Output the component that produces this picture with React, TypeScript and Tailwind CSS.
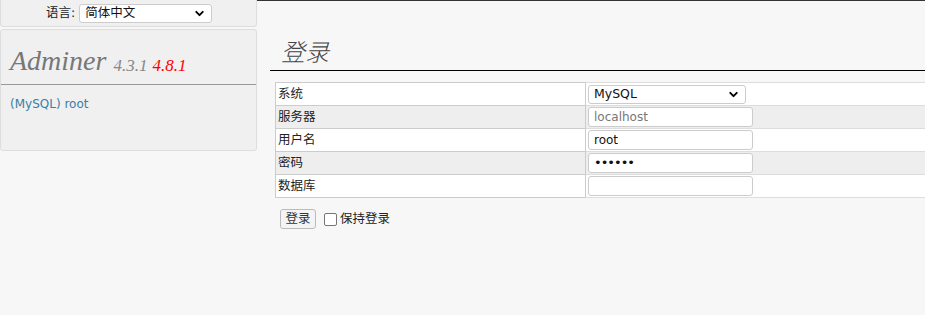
import { ChevronDown } from 'lucide-react'

const SANS = 'font-["DejaVu_Sans","Noto_Sans_CJK_SC",sans-serif]'

const ROWS = [
  { label: '系统', kind: 'select', value: 'MySQL' },
  { label: '服务器', kind: 'input', value: 'localhost', muted: true },
  { label: '用户名', kind: 'input', value: 'root' },
  { label: '密码', kind: 'input', value: '••••••' },
  { label: '数据库', kind: 'input', value: '' },
]

function FakeSelect({ value, width }: { value: string; width: string }) {
  return (
    <div className={`${width} h-[19px] bg-white border border-[#ccc] rounded-[3px] flex items-center justify-between pl-[5px] pr-[5px]`}>
      <span className="text-[12.5px] text-[#111] leading-none not-italic">{value}</span>
      <ChevronDown className="w-[13px] h-[13px] text-black" strokeWidth={3.5} />
    </div>
  )
}

export default function App() {
  return (
    <div className={`${SANS} w-[925px] h-[315px] overflow-hidden bg-[#f7f7f7] flex text-[#222]`}>
      {/* sidebar */}
      <div className="w-[257px] shrink-0">
        <div className="h-[27px] bg-[#f0f0f0] border border-t-0 border-[#ddd] rounded-b-[3px] flex items-center pl-[45px] gap-[4px]">
          <span className="text-[12.5px]">语言:</span>
          <FakeSelect value="简体中文" width="w-[133px]" />
        </div>
        <div className="mt-[2px] h-[122px] bg-[#f0f0f0] border border-[#ddd] rounded-[3px]">
          <div className="h-[55px] border-b border-[#999] flex items-end pl-[9px] pb-[9px]">
            <span className='font-["Liberation_Serif",serif] italic text-[28px] leading-none text-[#777]'>Adminer</span>
            <span className='font-["Liberation_Serif",serif] italic text-[17px] leading-none text-[#888] ml-[7px] mb-[1px]'>4.3.1</span>
            <span className='font-["Liberation_Serif",serif] italic text-[17px] leading-none text-[#f00] ml-[5px] mb-[1px]'>4.8.1</span>
          </div>
          <div className="pl-[9px] pt-[10px] text-[12px] text-[#3a7ea6]">(MySQL) root</div>
        </div>
      </div>

      {/* content */}
      <div className="flex-1 border-t border-[#333] pl-[13px]">
        <h2 className="mt-[38px] pl-[11px] pb-[3px] border-b border-black text-[24px] leading-[28px] italic font-light text-[#444]">登录</h2>
        <table className="ml-[5px] mt-[11px] w-[700px] border border-[#bbb] border-collapse">
          <tbody>
            {ROWS.map((r, i) => (
              <tr key={r.label} className={i % 2 ? 'bg-[#eee]' : 'bg-white'}>
                <td className="w-[310px] h-[23px] border border-[#ccc] pl-[2px] text-[12.5px] leading-none">{r.label}</td>
                <td className="h-[23px] border border-[#ddd] pl-[2px]">
                  {r.kind === 'select' ? (
                    <FakeSelect value={r.value} width="w-[158px]" />
                  ) : (
                    <div className={`w-[165px] h-[20px] bg-white border border-[#ccc] rounded-[3px] flex items-center pl-[5px] text-[12px] not-italic ${r.muted ? 'text-[#777]' : 'text-[#111]'} ${r.value.startsWith('•') ? 'tracking-[-1px] text-[13px]' : ''}`}>
                      {r.value}
                    </div>
                  )}
                </td>
              </tr>
            ))}
          </tbody>
        </table>
        <div className="ml-[10px] mt-[11px] flex items-center gap-[8px]">
          <button className="w-[36px] h-[20px] bg-[#f4f4f4] border border-[#bbb] rounded-[3px] text-[12.5px] leading-none text-[#333]">登录</button>
          <label className="flex items-center gap-[3px] text-[12.5px]">
            <span className="w-[13px] h-[13px] border border-[#767676] rounded-[2px] bg-white" />
            保持登录
          </label>
        </div>
      </div>
    </div>
  )
}
